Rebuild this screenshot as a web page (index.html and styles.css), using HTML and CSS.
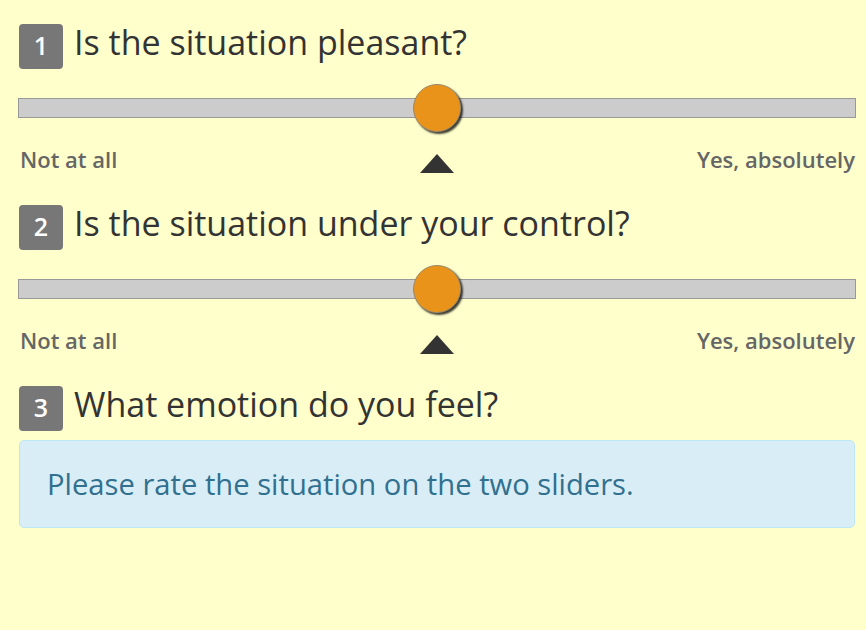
FILE: index.html
```html
<!DOCTYPE html>
<html>
<head>
<meta charset="utf-8">
<link rel="stylesheet" href="styles.css">
</head>
<body>
<div class="page">
  <section class="question">
    <div class="q-head">
      <span class="badge">1</span>
      <h2 class="q-title">Is the situation pleasant?</h2>
    </div>
    <div class="slider">
      <div class="track"></div>
      <div class="thumb"></div>
    </div>
    <div class="labels">
      <span class="lab-left">Not at all</span>
      <span class="caret"></span>
      <span class="lab-right">Yes, absolutely</span>
    </div>
  </section>
  <section class="question">
    <div class="q-head">
      <span class="badge">2</span>
      <h2 class="q-title">Is the situation under your control?</h2>
    </div>
    <div class="slider">
      <div class="track"></div>
      <div class="thumb"></div>
    </div>
    <div class="labels">
      <span class="lab-left">Not at all</span>
      <span class="caret"></span>
      <span class="lab-right">Yes, absolutely</span>
    </div>
  </section>
  <section class="question">
    <div class="q-head">
      <span class="badge">3</span>
      <h2 class="q-title">What emotion do you feel?</h2>
    </div>
    <div class="alert">Please rate the situation on the two sliders.</div>
  </section>
</div>
</body>
</html>
```
FILE: styles.css
```css
html, body {
  margin: 0;
  padding: 0;
  background: #ffffcc;
}
body {
  font-family: "Open Sans", "Liberation Sans", sans-serif;
  color: #333;
}
.page {
  padding: 24px 11px 0 19px;
}
.question {
  margin-bottom: 31px;
}
.question:last-child {
  margin-bottom: 0;
}
.q-head {
  display: flex;
  align-items: flex-start;
  gap: 11px;
  height: 45px;
}
.badge {
  display: flex;
  align-items: center;
  justify-content: center;
  box-sizing: border-box;
  width: 44px;
  height: 45px;
  padding-bottom: 3px;
  background: #777;
  color: #fff;
  border-radius: 4px;
  font-size: 25px;
  font-weight: 600;
}
.q-title {
  margin: 0;
  font-size: 34px;
  font-weight: 400;
  line-height: 36px;
  color: #333;
}
.slider {
  position: relative;
  margin: 29px -1px 0 -1px;
  height: 20px;
}
.track {
  height: 18px;
  background: #ccc;
  border: 1px solid #999;
}
.thumb {
  position: absolute;
  left: 50%;
  top: 50%;
  width: 46px;
  height: 46px;
  margin: -24px 0 0 -24px;
  border-radius: 50%;
  background: #ea931a;
  border: 1px solid #9a8a6a;
  box-shadow: 2px 2px 2px rgba(0,0,0,0.75);
}
.labels {
  display: grid;
  grid-template-columns: 1fr auto 1fr;
  align-items: center;
  margin-top: 26px;
  height: 30px;
  line-height: 30px;
  font-size: 22px;
  font-weight: 600;
  color: #666;
}
.lab-left { justify-self: start; padding-left: 1px; }
.lab-right { justify-self: end; }
.caret {
  align-self: end;
  width: 0;
  height: 0;
  border-left: 17px solid transparent;
  border-right: 17px solid transparent;
  border-bottom: 19px solid #333;
  margin-bottom: 1px;
}
.alert {
  margin-top: 9px;
  height: 88px;
  box-sizing: border-box;
  display: flex;
  align-items: center;
  padding: 0 27px;
  background: #d9edf7;
  border: 1px solid #bce8f1;
  border-radius: 5px;
  color: #31708f;
  font-size: 29.2px;
}
```
